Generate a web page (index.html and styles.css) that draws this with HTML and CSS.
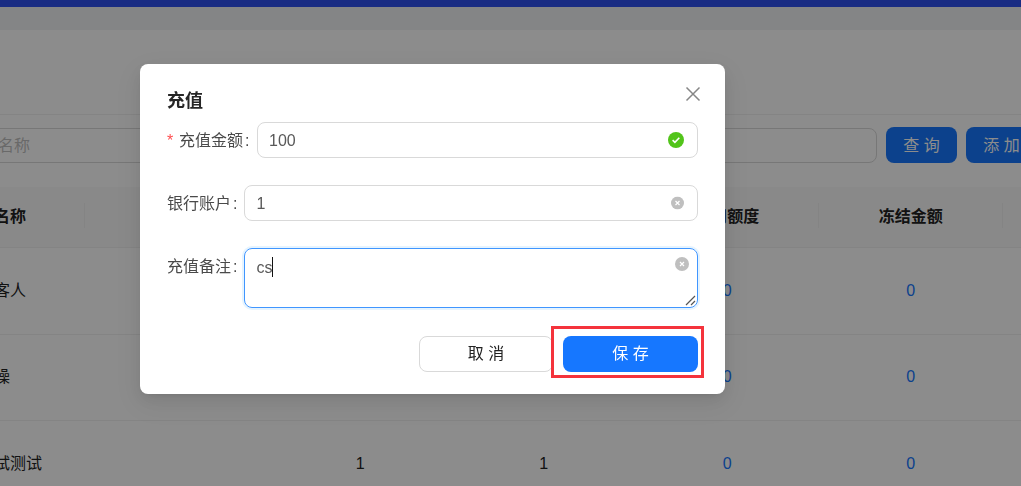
FILE: index.html
```html
<!DOCTYPE html>
<html lang="zh-CN">
<head>
<meta charset="utf-8">
<title>充值</title>
<link rel="stylesheet" href="styles.css">
</head>
<body>
<div class="page">
  <div class="topbar"></div>
  <main class="card">
    <div class="card-head"></div>
    <div class="search">
      <div class="search-input">名称</div>
      <button class="btn btn-primary search-btn">查 询</button>
      <button class="btn btn-primary search-btn">添 加</button>
    </div>
    <div class="table">
      <div class="th th-name">名称</div>
      <div class="th"></div>
      <div class="th"></div>
      <div class="th"></div>
      <div class="th">信用额度</div>
      <div class="th">冻结金额</div>
      <div class="th"></div>

      <div class="td td-name">客人</div>
      <div class="td"></div>
      <div class="td"></div>
      <div class="td"></div>
      <div class="td link">0</div>
      <div class="td link">0</div>
      <div class="td"></div>

      <div class="td td-name">操</div>
      <div class="td"></div>
      <div class="td"></div>
      <div class="td"></div>
      <div class="td link">0</div>
      <div class="td link">0</div>
      <div class="td"></div>

      <div class="td td-name">试测试</div>
      <div class="td"></div>
      <div class="td">1</div>
      <div class="td">1</div>
      <div class="td link">0</div>
      <div class="td link">0</div>
      <div class="td"></div>
    </div>
  </main>
</div>

<div class="mask"></div>

<section class="modal">
  <h2 class="modal-title">充值</h2>
  <svg class="modal-close" width="16" height="16" viewBox="0 0 16 16"><path d="M1.5 1.5l13 13M14.500 1.500l-13 13"/></svg>
  <form class="form">
    <div class="form-row">
      <label class="label label-required"><span class="star">*</span>充值金额<span class="colon">:</span></label>
      <div class="field field-amount">100
        <svg class="field-icon icon-ok" width="16" height="16" viewBox="0 0 16 16"><circle cx="8" cy="8" r="8" fill="#52c41a"/><path d="M4.600 8.200l2.300 2.200 4.400-4.600" fill="none" stroke="#fff" stroke-width="1.600"/></svg>
      </div>
    </div>
    <div class="form-row">
      <label class="label">银行账户<span class="colon">:</span></label>
      <div class="field field-plain field-amount">1
        <svg class="field-icon icon-clear" width="13" height="13" viewBox="0 0 13 13"><circle cx="6.500" cy="6.500" r="6.500" fill="#bfbfbf"/><path d="M4.500 4.500l4 4M8.500 4.500l-4 4" stroke="#fff" stroke-width="1.200"/></svg>
      </div>
    </div>
    <div class="form-row form-row-top">
      <label class="label">充值备注<span class="colon">:</span></label>
      <div class="field field-plain field-area">cs<span class="caret"></span>
        <svg class="icon-area-clear" width="14" height="14" viewBox="0 0 14 14"><circle cx="7" cy="7" r="7" fill="#bfbfbf"/><path d="M5 5l4 4M9 5l-4 4" stroke="#fff" stroke-width="1.200"/></svg>
        <svg class="resizer" width="11" height="11" viewBox="0 0 11 11"><path d="M1 10L10 1M6 10l4-4" stroke="#555" stroke-width="1.200" fill="none"/></svg>
      </div>
    </div>
    <div class="actions">
      <button type="button" class="btn btn-default">取 消</button>
      <button type="button" class="btn btn-primary btn-save">保 存</button>
    </div>
  </form>
</section>

<div class="annotation"></div>
</body>
</html>
```

FILE: styles.css
```css
* { box-sizing: border-box; }

html, body {
  margin: 0;
  padding: 0;
  height: 100%;
  overflow: hidden;
  background: #f0f2f5;
  font-family: "Liberation Sans", "Noto Sans CJK SC", sans-serif;
  font-size: 16px;
  color: #222;
}

.page {
  height: 486px;
  overflow: hidden;
  display: flex;
  flex-direction: column;
}

.topbar {
  flex: none;
  height: 7px;
  background: #2f50ef;
}

.card {
  flex: 1;
  margin-top: 23px;
  background: #fff;
}

.card-head {
  height: 85px;
  border-bottom: 1px solid #f0f0f0;
}

.search {
  display: flex;
  align-items: center;
  gap: 9px;
  margin: 12px 0 24px -100px;
  width: 1240px;
}

.search-input {
  width: 977px;
  height: 35px;
  padding-left: 97px;
  border: 1px solid #d9d9d9;
  border-radius: 8px;
  line-height: 33px;
  color: #bfbfbf;
}

.btn {
  height: 36px;
  border-radius: 8px;
  font-family: inherit;
  font-size: 16px;
  border: 1px solid transparent;
  padding: 0 0 4px;
  cursor: pointer;
}

.btn-primary {
  background: #1677ff;
  color: #fff;
}

.btn-default {
  background: #fff;
  border-color: #d9d9d9;
  color: #222;
  width: 134px;
}

.search-btn {
  flex: none;
  width: 71px;
  padding-bottom: 3px;
}

.table {
  display: grid;
  grid-template-columns: repeat(7, 183.500px);
  grid-template-rows: 61px 86.500px 86.500px 86.500px;
  margin-left: -98.500px;
  width: 1284.500px;
}

.th, .td {
  position: relative;
  display: flex;
  align-items: center;
  justify-content: center;
  border-bottom: 1px solid #f0f0f0;
}

.th {
  background: #fafafa;
  font-weight: 700;
  padding-bottom: 4px;
}

.th::after {
  content: "";
  position: absolute;
  right: 0;
  top: 16px;
  height: 25px;
  width: 1px;
  background: #f0f0f0;
}

.th-name, .td-name {
  justify-content: flex-start;
  padding-left: 92.500px;
}

.td-name {
  padding-bottom: 4px;
}

.link {
  color: #1677ff;
}

.mask {
  position: fixed;
  inset: 0;
  background: rgba(0, 0, 0, 0.45);
}

.modal {
  position: fixed;
  left: 140px;
  top: 64px;
  width: 585px;
  height: 330px;
  padding: 25px 27px 22px;
  background: #fff;
  border-radius: 8px;
  box-shadow: 0 6px 16px 0 rgba(0, 0, 0, 0.08), 0 3px 6px -4px rgba(0, 0, 0, 0.12), 0 9px 28px 8px rgba(0, 0, 0, 0.05);
}

.modal-title {
  margin: 0 0 9px;
  font-size: 18px;
  line-height: 24px;
  font-weight: 700;
  color: #262626;
}

.modal-close {
  position: absolute;
  right: 24px;
  top: 22px;
}

.modal-close path {
  fill: none;
  stroke: #868686;
  stroke-width: 1.500;
}

.form {
  display: flex;
  flex-direction: column;
  gap: 27px;
}

.form-row {
  display: flex;
  align-items: center;
}

.form-row-top {
  align-items: flex-start;
}

.label {
  flex: none;
  color: #4a4a4a;
  white-space: nowrap;
  padding-bottom: 2px;
}

.form-row-top .label {
  padding-bottom: 0;
  line-height: 38px;
}

.label-required {
  padding-right: 1px;
}

.star {
  display: inline-block;
  width: 12px;
  color: #ff4d4f;
}

.colon {
  margin: 0 6.600px 0 2px;
}

.field {
  position: relative;
  flex: 1;
  height: 36px;
  padding-left: 11px;
  border: 1px solid #d9d9d9;
  border-radius: 8px;
  line-height: 34px;
  color: #595959;
}

.field-amount {
  line-height: 35px;
}

.field-plain {
  padding-left: 11.500px;
}

.field-area {
  height: 60px;
  line-height: 37px;
  border-color: #4096ff;
  box-shadow: 0 0 0 2px rgba(5, 145, 255, 0.1);
}

.caret {
  display: inline-block;
  width: 1px;
  height: 20px;
  margin-left: -1px;
  vertical-align: -4px;
  background: #111;
}

.field-icon {
  position: absolute;
  right: 13px;
  top: 50%;
  transform: translateY(-50%);
}

.icon-area-clear {
  position: absolute;
  right: 8px;
  top: 8px;
}

.resizer {
  position: absolute;
  right: 1px;
  bottom: 1px;
}

.actions {
  display: flex;
  justify-content: flex-end;
  gap: 10px;
  margin-top: 1px;
}

.btn-save {
  width: 135px;
}

.annotation {
  position: fixed;
  left: 551px;
  top: 326px;
  width: 153px;
  height: 52px;
  border: 3px solid #f4333c;
}
```
